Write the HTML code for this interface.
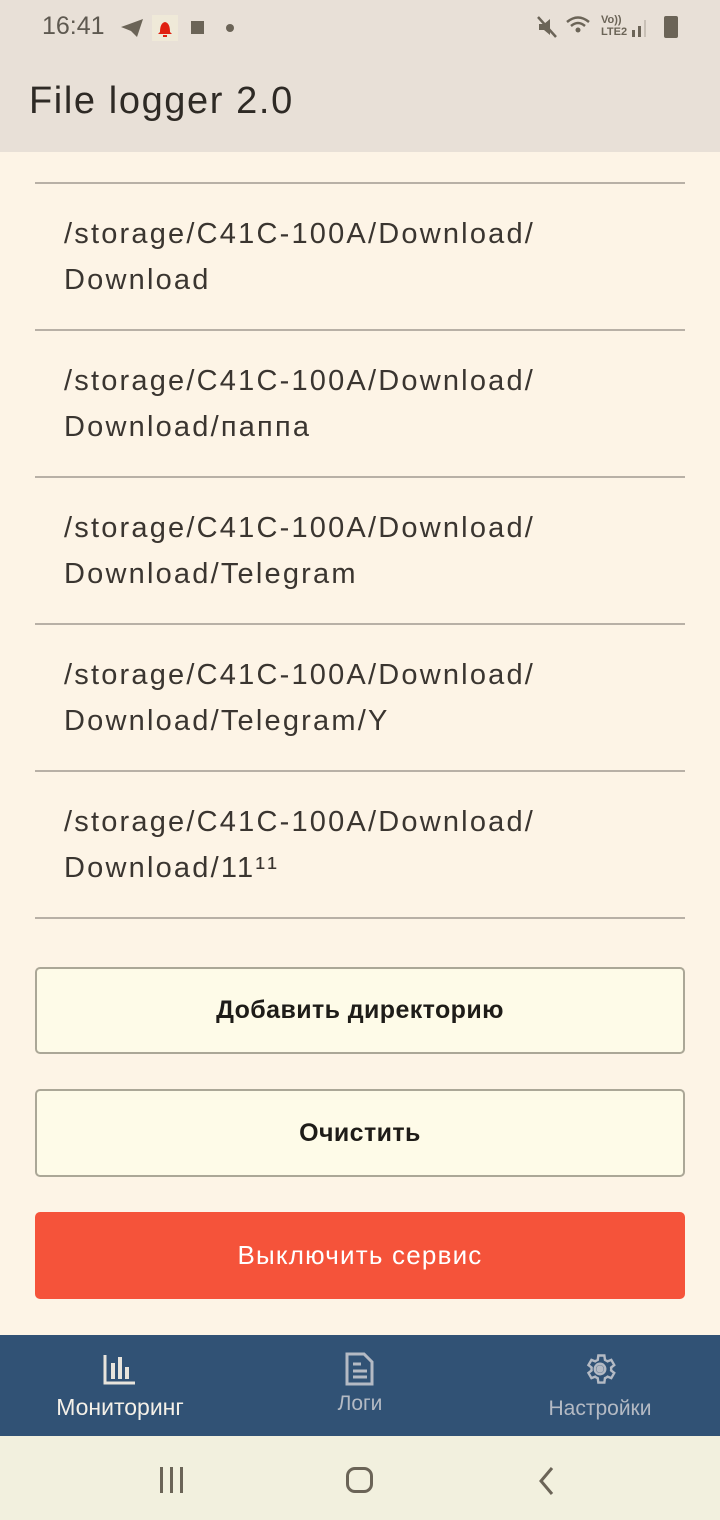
<!DOCTYPE html>
<html><head><meta charset="utf-8"><style>
*{margin:0;padding:0;box-sizing:border-box}
body{width:720px;height:1520px;background:#fdf4e6;font-family:"Liberation Sans",sans-serif;position:relative;overflow:hidden}
.status{position:absolute;top:0;left:0;width:720px;height:152px;background:#e8e0d7}
.time{position:absolute;left:42px;top:12px;font-size:25px;color:#5e5950}
.title{position:absolute;left:29px;top:80px;font-size:38px;color:#2e2a25;letter-spacing:1.6px}
.div{position:absolute;left:35px;width:650px;height:2px;background:#b8b0a6}
.item{position:absolute;left:64px;font-size:29px;line-height:46px;color:#3a3530;letter-spacing:2.2px}
.btn{position:absolute;left:35px;width:650px;border:2px solid #aba797;border-radius:5px;background:#fefbe8;font-size:25px;font-weight:bold;color:#1e1c18;display:flex;align-items:center;justify-content:center;letter-spacing:0.4px}
.red{background:#f5533a;border:none;color:#fff;font-weight:normal;font-size:26px;letter-spacing:1.2px}
.nav{position:absolute;top:1335px;left:0;width:720px;height:101px;background:#315275}
.nl{position:absolute;font-size:22px;text-align:center}
.sys{position:absolute;top:1436px;left:0;width:720px;height:84px;background:#f2f0de}
</style></head><body>
<div class="status">
<div class="time">16:41</div>
<svg style="position:absolute;left:120px;top:18px" width="24" height="20" viewBox="0 0 24 20"><path d="M1 9 L23 1 L17 19 L11 13 Z" fill="#6b6457"/></svg>
<div style="position:absolute;left:152px;top:15px;width:26px;height:26px;background:#efe9d8"></div>
<svg style="position:absolute;left:157px;top:19px" width="16" height="18"><path d="M3 13 Q3 4 8 3 Q13 4 13 13 L15 15 L1 15 Z M6 16 h4 v2 h-4z" fill="#e02010"/></svg>
<div style="position:absolute;left:191px;top:21px;width:13px;height:13px;background:#6b6457"></div>
<div style="position:absolute;left:226px;top:24px;width:8px;height:8px;border-radius:50%;background:#6b6457"></div>
<svg style="position:absolute;left:536px;top:15px" width="24" height="24"><path d="M3 9h5l6-5v16l-6-5H3z" fill="#6b6457"/><path d="M2 2 L20 22" stroke="#6b6457" stroke-width="2.5"/></svg>
<svg style="position:absolute;left:565px;top:15px" width="30" height="24"><path d="M2 7 Q13 -2 24 7" stroke="#6b6457" stroke-width="2.5" fill="none"/><path d="M6 11 Q13 5 20 11" stroke="#6b6457" stroke-width="2.5" fill="none"/><circle cx="13" cy="15" r="2.5" fill="#6b6457"/></svg>
<div style="position:absolute;left:601px;top:14px;font-size:11px;color:#6b6457;line-height:12px;font-weight:bold">Vo))<br>LTE2</div>
<div style="position:absolute;left:632px;top:30px;width:3px;height:7px;background:#6b6457"></div>
<div style="position:absolute;left:638px;top:26px;width:3px;height:11px;background:#6b6457"></div>
<div style="position:absolute;left:644px;top:20px;width:2px;height:17px;background:#c8c0b6"></div>
<div style="position:absolute;left:664px;top:16px;width:14px;height:22px;background:#6b6457;border-radius:2px"></div>
<div class="title">File logger 2.0</div>
</div>
<div class="div" style="top:182px"></div>
<div class="item" style="top:211px">/storage/C41C-100A/Download/<br>Download</div>
<div class="div" style="top:329px"></div>
<div class="item" style="top:358px">/storage/C41C-100A/Download/<br>Download/паппа</div>
<div class="div" style="top:476px"></div>
<div class="item" style="top:505px">/storage/C41C-100A/Download/<br>Download/Telegram</div>
<div class="div" style="top:623px"></div>
<div class="item" style="top:652px">/storage/C41C-100A/Download/<br>Download/Telegram/Y</div>
<div class="div" style="top:770px"></div>
<div class="item" style="top:799px">/storage/C41C-100A/Download/<br>Download/11¹¹</div>
<div class="div" style="top:917px"></div>
<div class="btn" style="top:967px;height:87px">Добавить директорию</div>
<div class="btn" style="top:1089px;height:88px">Очистить</div>
<div class="btn red" style="top:1212px;height:87px">Выключить сервис</div>
<div class="nav">
<svg style="position:absolute;left:103px;top:18px" width="34" height="34"><path d="M2 2 V30 H32" stroke="#e8e4dc" stroke-width="3" fill="none"/><rect x="8" y="10" width="4" height="16" fill="#e8e4dc"/><rect x="15" y="4" width="4" height="22" fill="#e8e4dc"/><rect x="22" y="14" width="4" height="12" fill="#e8e4dc"/></svg>
<div class="nl" style="left:0;width:240px;top:59px;color:#f4f0e8;font-size:23px">Мониторинг</div>
<svg style="position:absolute;left:345px;top:17px" width="30" height="34"><path d="M2 2 H19 L27 10 V32 H2 Z" stroke="#b4bac4" stroke-width="3" fill="none"/><path d="M8 12h8M8 19h14M8 25h14" stroke="#b4bac4" stroke-width="3"/></svg>
<div class="nl" style="left:240px;width:240px;top:57px;color:#b4bac4;font-size:21px">Логи</div>
<svg style="position:absolute;left:582px;top:16px" width="36" height="36" viewBox="0 0 24 24"><path d="M12 15.5A3.5 3.5 0 1 1 12 8.5A3.5 3.5 0 0 1 12 15.5M19.4 13c.04-.3.06-.65.06-1s-.02-.7-.06-1l2.1-1.650-2-3.46-2.5 1a7 7 0 0 0-1.7-1L14.9 3h-4l-.4 2.9a7 7 0 0 0-1.7 1l-2.5-1-2 3.46L6.4 11c-.04.3-.06.65-.06 1s.02.7.06 1l-2.1 1.65 2 3.46 2.5-1a7 7 0 0 0 1.7 1l.4 2.9h4l.4-2.9a7 7 0 0 0 1.7-1l2.5 1 2-3.46z" stroke="#b4bac4" stroke-width="1.6" fill="none"/><circle cx="12" cy="12" r="2.5" fill="#b4bac4"/></svg>
<div class="nl" style="left:480px;width:240px;top:62px;color:#b4bac4;font-size:21px">Настройки</div>
</div>
<div class="sys">
<div style="position:absolute;left:160px;top:31px;width:3px;height:26px;background:#6b6457;box-shadow:10px 0 0 #6b6457,20px 0 0 #6b6457"></div>
<div style="position:absolute;left:346px;top:31px;width:27px;height:26px;border:3px solid #6b6457;border-radius:9px"></div>
<svg style="position:absolute;left:537px;top:30px" width="20" height="30"><path d="M15 2 L4 15 L15 28" stroke="#6b6457" stroke-width="3" fill="none"/></svg>
</div>
</body></html>
